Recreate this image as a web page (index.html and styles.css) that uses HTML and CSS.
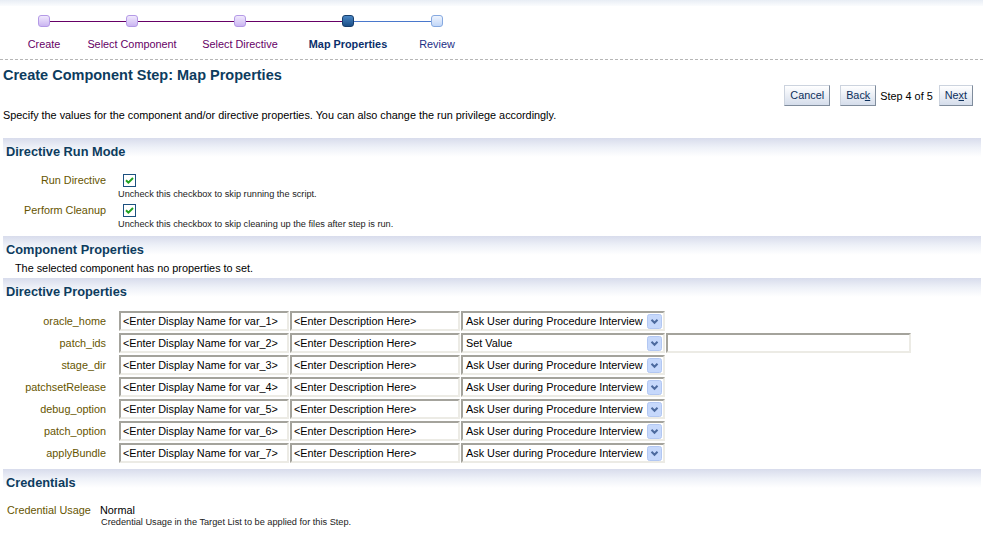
FILE: index.html
```html
<!DOCTYPE html>
<html>
<head>
<meta charset="utf-8">
<title>Create Component Step: Map Properties</title>
<link rel="stylesheet" href="styles.css">
</head>
<body>
<div class="topband"></div>
<div class="train">
  <div class="step step-done step-first">
    <div class="step-track"><span class="node"></span></div>
    <div class="step-label">Create</div>
  </div>
  <div class="step step-done">
    <div class="step-track"><span class="node"></span></div>
    <div class="step-label">Select Component</div>
  </div>
  <div class="step step-done">
    <div class="step-track"><span class="node"></span></div>
    <div class="step-label">Select Directive</div>
  </div>
  <div class="step step-current">
    <div class="step-track"><span class="node"></span></div>
    <div class="step-label">Map Properties</div>
  </div>
  <div class="step step-todo step-last">
    <div class="step-track"><span class="node"></span></div>
    <div class="step-label">Review</div>
  </div>
</div>

<div class="page">
  <h1 class="title">Create Component Step: Map Properties</h1>
  <div class="actions">
    <button class="btn btn-cancel">Cancel</button>
    <button class="btn">Bac<u>k</u></button>
    <span class="stepinfo">Step 4 of 5</span>
    <button class="btn">Ne<u>x</u>t</button>
  </div>
  <p class="desc">Specify the values for the component and/or directive properties. You can also change the run privilege accordingly.</p>

  <div class="band band-first">Directive Run Mode</div>
  <div class="runmode">
    <div class="field">
      <div class="flabel">Run Directive</div>
      <div class="fvalue">
        <div class="checkrow"><svg class="check" width="13" height="13" viewBox="0 0 13 13"><rect x="0.5" y="0.5" width="12" height="12" fill="#fff" stroke="#1c5180"/><path d="M3 6.2 L5.4 8.6 L10 4" fill="none" stroke="#21a121" stroke-width="2"/></svg></div>
        <div class="hint">Uncheck this checkbox to skip running the script.</div>
      </div>
    </div>
    <div class="field field-next">
      <div class="flabel">Perform Cleanup</div>
      <div class="fvalue">
        <div class="checkrow"><svg class="check" width="13" height="13" viewBox="0 0 13 13"><rect x="0.5" y="0.5" width="12" height="12" fill="#fff" stroke="#1c5180"/><path d="M3 6.2 L5.4 8.6 L10 4" fill="none" stroke="#21a121" stroke-width="2"/></svg></div>
        <div class="hint">Uncheck this checkbox to skip cleaning up the files after step is run.</div>
      </div>
    </div>
  </div>

  <div class="band band-comp">Component Properties</div>
  <p class="nodata">The selected component has no properties to set.</p>

  <div class="band">Directive Properties</div>
  <div class="props">
    <div class="prow">
      <div class="plabel">oracle_home</div>
      <div class="inp inp-name">&lt;Enter Display Name for var_1&gt;</div>
      <div class="inp inp-desc">&lt;Enter Description Here&gt;</div>
      <div class="sel"><span class="sel-text">Ask User during Procedure Interview</span><svg width="15" height="15" viewBox="0 0 15 15"><rect x="0.5" y="0.5" width="14" height="14" rx="2" fill="#c6d8fb" stroke="#b2c7f2"/><path d="M4.5 5.8 L7.5 8.8 L10.5 5.8" fill="none" stroke="#4d6a9e" stroke-width="2"/></svg></div>
    </div>
    <div class="prow">
      <div class="plabel">patch_ids</div>
      <div class="inp inp-name">&lt;Enter Display Name for var_2&gt;</div>
      <div class="inp inp-desc">&lt;Enter Description Here&gt;</div>
      <div class="sel"><span class="sel-text">Set Value</span><svg width="15" height="15" viewBox="0 0 15 15"><rect x="0.5" y="0.5" width="14" height="14" rx="2" fill="#c6d8fb" stroke="#b2c7f2"/><path d="M4.5 5.8 L7.5 8.8 L10.5 5.8" fill="none" stroke="#4d6a9e" stroke-width="2"/></svg></div>
      <div class="inp inp-value"></div>
    </div>
    <div class="prow">
      <div class="plabel">stage_dir</div>
      <div class="inp inp-name">&lt;Enter Display Name for var_3&gt;</div>
      <div class="inp inp-desc">&lt;Enter Description Here&gt;</div>
      <div class="sel"><span class="sel-text">Ask User during Procedure Interview</span><svg width="15" height="15" viewBox="0 0 15 15"><rect x="0.5" y="0.5" width="14" height="14" rx="2" fill="#c6d8fb" stroke="#b2c7f2"/><path d="M4.5 5.8 L7.5 8.8 L10.5 5.8" fill="none" stroke="#4d6a9e" stroke-width="2"/></svg></div>
    </div>
    <div class="prow">
      <div class="plabel">patchsetRelease</div>
      <div class="inp inp-name">&lt;Enter Display Name for var_4&gt;</div>
      <div class="inp inp-desc">&lt;Enter Description Here&gt;</div>
      <div class="sel"><span class="sel-text">Ask User during Procedure Interview</span><svg width="15" height="15" viewBox="0 0 15 15"><rect x="0.5" y="0.5" width="14" height="14" rx="2" fill="#c6d8fb" stroke="#b2c7f2"/><path d="M4.5 5.8 L7.5 8.8 L10.5 5.8" fill="none" stroke="#4d6a9e" stroke-width="2"/></svg></div>
    </div>
    <div class="prow">
      <div class="plabel">debug_option</div>
      <div class="inp inp-name">&lt;Enter Display Name for var_5&gt;</div>
      <div class="inp inp-desc">&lt;Enter Description Here&gt;</div>
      <div class="sel"><span class="sel-text">Ask User during Procedure Interview</span><svg width="15" height="15" viewBox="0 0 15 15"><rect x="0.5" y="0.5" width="14" height="14" rx="2" fill="#c6d8fb" stroke="#b2c7f2"/><path d="M4.5 5.8 L7.5 8.8 L10.5 5.8" fill="none" stroke="#4d6a9e" stroke-width="2"/></svg></div>
    </div>
    <div class="prow">
      <div class="plabel">patch_option</div>
      <div class="inp inp-name">&lt;Enter Display Name for var_6&gt;</div>
      <div class="inp inp-desc">&lt;Enter Description Here&gt;</div>
      <div class="sel"><span class="sel-text">Ask User during Procedure Interview</span><svg width="15" height="15" viewBox="0 0 15 15"><rect x="0.5" y="0.5" width="14" height="14" rx="2" fill="#c6d8fb" stroke="#b2c7f2"/><path d="M4.5 5.8 L7.5 8.8 L10.5 5.8" fill="none" stroke="#4d6a9e" stroke-width="2"/></svg></div>
    </div>
    <div class="prow">
      <div class="plabel">applyBundle</div>
      <div class="inp inp-name">&lt;Enter Display Name for var_7&gt;</div>
      <div class="inp inp-desc">&lt;Enter Description Here&gt;</div>
      <div class="sel"><span class="sel-text">Ask User during Procedure Interview</span><svg width="15" height="15" viewBox="0 0 15 15"><rect x="0.5" y="0.5" width="14" height="14" rx="2" fill="#c6d8fb" stroke="#b2c7f2"/><path d="M4.5 5.8 L7.5 8.8 L10.5 5.8" fill="none" stroke="#4d6a9e" stroke-width="2"/></svg></div>
    </div>
  </div>

  <div class="band band-cred">Credentials</div>
  <div class="cred">
    <div class="cred-label">Credential Usage</div>
    <div class="cred-value">
      <div class="cred-main">Normal</div>
      <div class="hint cred-hint">Credential Usage in the Target List to be applied for this Step.</div>
    </div>
  </div>
</div>
</body>
</html>
```
FILE: styles.css
```css
* { box-sizing: border-box; }

body {
  margin: 0;
  background: #fff;
  color: #000;
  font-family: "Liberation Sans", Arial, sans-serif;
  font-size: 10.85px;
}

/* ---------- train ---------- */
.topband {
  height: 6px;
  background: linear-gradient(#e8edf5, #fbfcfe);
}

.train {
  display: flex;
  height: 54px;
  padding-top: 9px;
  border-bottom: 1px dashed #b6b6b6;
}

.step {
  display: flex;
  flex-direction: column;
  align-items: center;
  width: 88px;
}
.step:nth-child(3) { width: 128px; }
.step:nth-child(5) { width: 90px; }

.step-track {
  display: flex;
  align-items: center;
  width: 100%;
  height: 12px;
}
.step-track::before,
.step-track::after {
  content: "";
  flex: 1;
  height: 1px;
  background: #660066;
}
.step-current .step-track::after,
.step-todo .step-track::before,
.step-todo .step-track::after { background: #4a78cc; }
.step-first .step-track::before,
.step-last .step-track::after { background: transparent; }

.node {
  width: 12px;
  height: 12px;
  border-radius: 3px;
  border: 1px solid #b49ae6;
  background: linear-gradient(#f1e9fd, #cbb6f2);
}
.step-current .node {
  border-color: #163e6c;
  background: linear-gradient(#4a86c4, #1b4f88);
}
.step-todo .node {
  border-color: #86a9e0;
  background: linear-gradient(#eef4fe, #c2d7f8);
}

.step-label {
  margin-top: 10px;
  line-height: 14px;
  white-space: nowrap;
  color: #660066;
}
.step-current .step-label { color: #0b2f6b; font-weight: bold; }
.step-todo .step-label { color: #1c2f86; }

/* ---------- page ---------- */
.page { padding: 0 2px 0 3px; }

.title {
  margin: 6px 0 0;
  font-size: 14.5px;
  line-height: 18px;
  font-weight: bold;
  color: #0d3c5e;
}

.actions {
  display: flex;
  justify-content: flex-end;
  align-items: center;
  margin-top: 1px;
  padding-right: 8px;
  height: 21px;
}

.btn {
  height: 21px;
  padding: 0 5px;
  border: 1px solid;
  border-color: #ccd3de #7f8c9c #7f8c9c #ccd3de;
  background: linear-gradient(#ffffff, #d5ddeb);
  color: #0c2f5c;
  font-family: inherit;
  font-size: 10.85px;
  line-height: 19px;
}
.btn-cancel { margin-right: 10px; }
.btn u { text-decoration: underline; }

.stepinfo { margin: 0 6px 0 4px; }

.desc {
  margin: 2px 0 0;
  line-height: 14px;
}

/* ---------- section bands ---------- */
.band {
  height: 21px;
  padding: 6px 0 0 3px;
  background: linear-gradient(#d8dcec, #eef1f8 45%, #ffffff 90%);
  color: #0d3c5e;
  font-size: 12.8px;
  line-height: 15px;
  font-weight: bold;
}
.band-first { margin-top: 16px; }
.band-comp { margin-top: 6px; }
.band-cred { margin-top: 6px; }

/* ---------- run mode ---------- */
.runmode { padding-top: 13px; }

.field {
  display: grid;
  grid-template-columns: 103px 1fr;
  column-gap: 12px;
}
.field-next { margin-top: 2px; }

.flabel {
  text-align: right;
  line-height: 16px;
  color: #665500;
}

.checkrow {
  display: flex;
  align-items: center;
  height: 16px;
  padding-left: 5px;
}

.hint {
  font-size: 9.2px;
  line-height: 12px;
  color: #222;
}

.nodata {
  margin: 4px 0 3px 12px;
  line-height: 14px;
}

/* ---------- directive properties ---------- */
.props { padding-top: 12px; }

.prow {
  display: flex;
  align-items: center;
  height: 20px;
  margin-bottom: 2px;
}

.plabel {
  width: 103px;
  margin-right: 13px;
  text-align: right;
  color: #665500;
  white-space: nowrap;
}

.inp,
.sel {
  height: 20px;
  border: 2px solid;
  border-color: #a4a39c #ecebe5 #ecebe5 #a4a39c;
  background: #fff;
  padding-left: 2px;
  line-height: 16px;
  white-space: nowrap;
  overflow: hidden;
}
.inp-name { width: 170px; margin-right: 1px; }
.inp-desc { width: 170px; margin-right: 1px; }
.inp-value { width: 245px; margin-left: 1px; }

.sel {
  display: flex;
  align-items: center;
  justify-content: space-between;
  width: 204px;
  padding-right: 1px;
}
.sel-text { padding-left: 1px; }
.sel svg { flex: none; }

/* ---------- credentials ---------- */
.cred {
  display: flex;
  padding-top: 14px;
}
.cred-label {
  width: 97px;
  padding-left: 4px;
  line-height: 13px;
  color: #665500;
}
.cred-main { line-height: 13px; }
.cred-hint { line-height: 10px; padding-left: 1px; }
```
